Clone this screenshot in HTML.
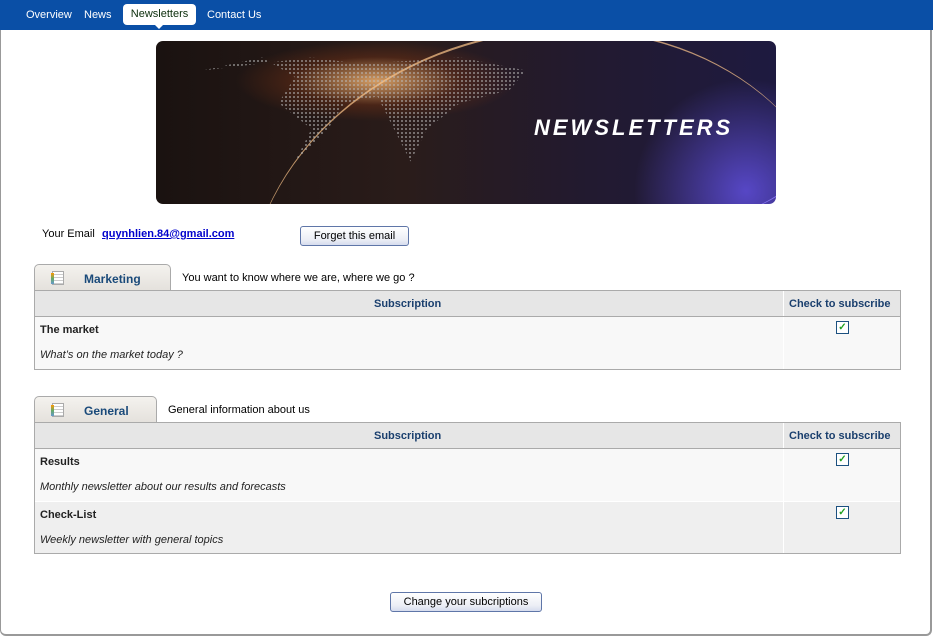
<!DOCTYPE html>
<html><head><style>
*{margin:0;padding:0;box-sizing:border-box}
body{width:933px;height:636px;background:#fff;font-family:"Liberation Sans",sans-serif;font-size:11px;color:#000;position:relative;overflow:hidden}
.frame{position:absolute;left:0;top:0;width:932px;height:636px;border-left:1px solid #999;border-right:2px solid #999;border-bottom:2px solid #999;border-radius:0 0 6px 6px}
.top{position:absolute;left:0;top:0;width:933px;height:30px;background:#0a4fa6}
.nav{position:absolute;top:9px;color:#fff;font-size:11px}
.sel{position:absolute;left:123px;top:4px;width:73px;height:21px;background:#fff;border-radius:4px;color:#0b2d0b;font-size:11px;text-align:center;line-height:21px}
.sel:after{content:"";position:absolute;left:32px;bottom:-4px;border:4px solid transparent;border-top-color:#fff;border-bottom:0}
.banner{position:absolute;left:156px;top:41px;width:620px;height:163px;border-radius:7px;overflow:hidden;
background:radial-gradient(ellipse 140px 40px at 220px 40px,rgba(255,190,120,.8),rgba(150,60,20,.3) 60%,transparent),radial-gradient(ellipse 160px 160px at 590px 150px,rgba(110,90,255,.7),transparent 70%),linear-gradient(90deg,#1a1210,#2a1c1a 40%,#221a30 70%,#1e1a40)}
.arc{position:absolute;left:90px;top:-10px;width:600px;height:500px;border-radius:50%;border-top:2px solid rgba(255,200,140,.7);transform:rotate(-12deg)}
.arc2{position:absolute;left:380px;top:-60px;width:300px;height:240px;border-radius:50%;border-right:3px solid rgba(150,130,255,.8)}
.dots{position:absolute;left:40px;top:10px;width:330px;height:130px;background-image:radial-gradient(circle,#bbb 0.9px,transparent 1.2px);background-size:4px 4px;opacity:.6;clip-path:polygon(2% 15%,20% 5%,30% 20%,25% 40%,35% 60%,30% 85%,40% 60%,45% 40%,55% 35%,60% 60%,65% 85%,70% 60%,80% 40%,95% 30%,100% 15%,80% 5%,50% 10%,35% 5%)}
.btitle{position:absolute;left:378px;top:74px;color:#fff;font-size:22px;font-style:italic;font-weight:bold;letter-spacing:3px}
.btn{position:absolute;height:20px;border:1px solid #5f76a8;border-radius:3px;background:linear-gradient(#fff,#eceef5 70%,#d6dcee);font-size:11px;text-align:center;line-height:18px}
.tab{position:absolute;left:34px;height:27px;border:1px solid #aaa;border-bottom:none;border-radius:5px 5px 0 0;background:linear-gradient(#f4f2ee,#e4e1dc)}
.tab b{position:absolute;left:49px;top:7px;color:#1a4a7a;font-size:12px}
.ico{position:absolute;left:17px;top:6px;width:12px;height:14px;border:1px solid #aaa;background:repeating-linear-gradient(#fff 0 2px,#ccc 2px 3px)}
.ico:before{content:"";position:absolute;left:-2px;top:1px;width:3px;height:11px;background:linear-gradient(#f90,#6a6 50%,#69c)}
.tbl{position:absolute;left:34px;width:867px;border:1px solid #aaa;background:#f8f8f8}
.hd{height:26px;background:#e6e6e6;border-bottom:1px solid #aaa;position:relative;color:#1a3f6e;font-weight:bold;font-size:11px}
.row{position:relative;height:52px;border-top:1px solid #fff}
.row.alt{background:#efefef}
.vlw{position:absolute;left:748px;top:0;bottom:0;width:1px;background:#fff}
.t{position:absolute;left:5px;top:7px;font-weight:bold;color:#222}
.d{position:absolute;left:5px;top:32px;font-style:italic;color:#222;font-size:11px}
.cb{position:absolute;left:801px;top:4px;width:13px;height:13px;border:1px solid #1c5180;background:#fff;color:#21a121;font-size:10px;line-height:11px;text-align:center;font-weight:bold}
</style></head><body>
<div class="frame"></div>
<div class="top"></div>
<div class="nav" style="left:26px">Overview</div>
<div class="nav" style="left:84px">News</div>
<div class="sel">Newsletters</div>
<div class="nav" style="left:207px">Contact Us</div>
<div class="banner"><div class="arc"></div><div class="arc2"></div><div class="dots"></div><div class="btitle">NEWSLETTERS</div></div>
<div style="position:absolute;left:42px;top:228px">Your Email</div>
<div style="position:absolute;left:102px;top:228px;color:#00c;font-weight:bold;text-decoration:underline">quynhlien.84@gmail.com</div>
<div class="btn" style="left:300px;top:226px;width:109px">Forget this email</div>

<div class="tab" style="top:264px;width:137px"><div class="ico"></div><b>Marketing</b></div>
<div style="position:absolute;left:182px;top:272px">You want to know where we are, where we go ?</div>
<div class="tbl" style="top:290px">
<div class="hd"><span style="position:absolute;left:339px;top:7px">Subscription</span><div class="vlw"></div><span style="position:absolute;left:754px;top:7px">Check to subscribe</span></div>
<div class="row" style="border-top:none"><div class="t">The market</div><div class="d">What’s on the market today ?</div><div class="vlw"></div><div class="cb">✓</div></div>
</div>

<div class="tab" style="top:396px;width:123px"><div class="ico"></div><b>General</b></div>
<div style="position:absolute;left:168px;top:404px">General information about us</div>
<div class="tbl" style="top:422px">
<div class="hd"><span style="position:absolute;left:339px;top:7px">Subscription</span><div class="vlw"></div><span style="position:absolute;left:754px;top:7px">Check to subscribe</span></div>
<div class="row" style="border-top:none"><div class="t">Results</div><div class="d">Monthly newsletter about our results and forecasts</div><div class="vlw"></div><div class="cb">✓</div></div>
<div class="row alt"><div class="t">Check-List</div><div class="d">Weekly newsletter with general topics</div><div class="vlw"></div><div class="cb">✓</div></div>
</div>

<div class="btn" style="left:390px;top:592px;width:152px">Change your subcriptions</div>
</body></html>
